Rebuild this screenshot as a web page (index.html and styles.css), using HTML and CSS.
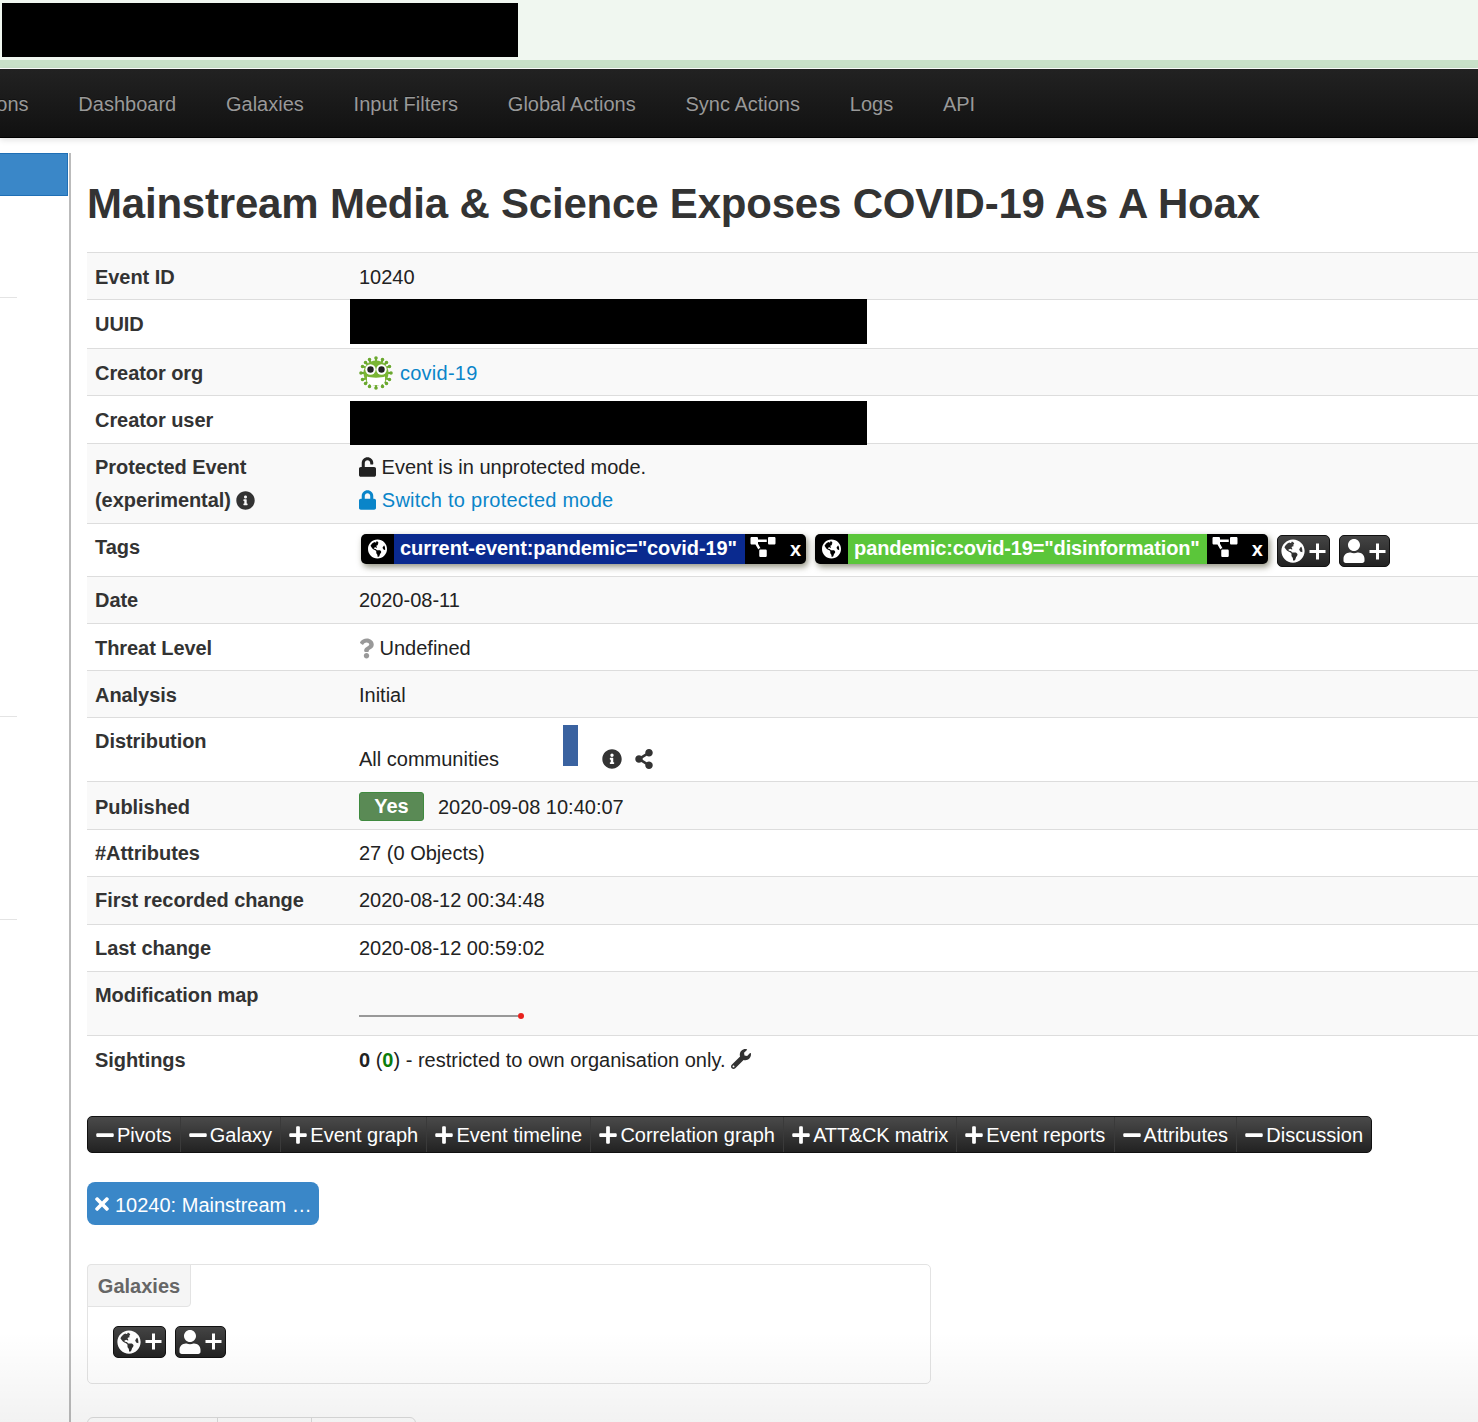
FILE: index.html
```html
<!DOCTYPE html>
<html lang="en">
<head>
    <meta charset="UTF-8">
    <meta name="viewport" content="width=device-width, initial-scale=1.0">
    <title>Mainstream Media &amp; Science Exposes COVID-19 As A Hoax</title>
    <link rel="stylesheet" href="styles.css">
</head>
<body>
    <svg class="icon-defs" xmlns="http://www.w3.org/2000/svg">
        <symbol id="i-globe" viewBox="0 0 496 512"><path d="M248 8C111.03 8 0 119.03 0 256s111.03 248 248 248 248-111.03 248-248S384.97 8 248 8zm82.29 357.6c-3.9 3.88-7.99 7.95-11.31 11.28-2.99 3-5.1 6.7-6.17 10.71-1.51 5.66-2.73 11.38-4.77 16.87l-17.39 46.85c-13.76 3-28 4.69-42.65 4.69v-27.38c1.69-12.62-7.64-36.26-22.63-51.25-6-6-9.37-14.14-9.37-22.63v-32.01c0-11.64-6.27-22.34-16.46-27.97-14.37-7.95-34.81-19.06-48.81-26.11-11.48-5.78-22.1-13.14-31.65-21.75l-.8-.72a114.792 114.792 0 0 1-18.06-20.74c-9.38-13.77-24.66-36.42-34.59-51.14 20.47-45.5 57.36-82.04 103.2-101.89l24.01 12.01C203.48 89.74 216 82.01 216 70.11v-11.3c7.99-1.29 16.12-2.11 24.42-2.43l28.3 28.3c6.25 6.25 6.25 16.38 0 22.63L264 112l-10.34 10.34c-3.12 3.12-3.12 8.19 0 11.31l4.69 4.69c3.12 3.12 3.12 8.19 0 11.31l-8 8a8.008 8.008 0 0 1-5.66 2.34h-8.99c-2.08 0-4.08.81-5.58 2.27l-9.92 9.65a8.008 8.008 0 0 0-1.58 9.31l15.59 31.19c2.66 5.32-1.21 11.58-7.15 11.58h-5.64c-1.93 0-3.79-.7-5.24-1.96l-9.28-8.06a16.017 16.017 0 0 0-15.55-3.1l-31.17 10.39a11.95 11.95 0 0 0-8.17 11.34c0 4.53 2.56 8.66 6.61 10.69l11.08 5.54c9.41 4.71 19.79 7.16 30.31 7.16s22.59 27.29 32 32h66.75c8.49 0 16.62 3.37 22.63 9.37l13.69 13.69a30.503 30.503 0 0 1 8.93 21.57 46.536 46.536 0 0 1-13.72 32.98zM417 274.25c-5.79-1.45-10.84-5-14.15-9.97l-17.98-26.97a23.97 23.97 0 0 1 0-26.62l19.59-29.38c2.32-3.47 5.5-6.29 9.24-8.15l12.98-6.49C440.2 193.59 448 223.87 448 256c0 8.67-.74 17.16-1.82 25.54L417 274.25z"/></symbol>
        <symbol id="i-diagram" viewBox="0 0 640 512"><path d="M384 320H256c-17.67 0-32 14.33-32 32v128c0 17.67 14.33 32 32 32h128c17.67 0 32-14.33 32-32V352c0-17.67-14.33-32-32-32zM192 32c0-17.67-14.33-32-32-32H32C14.33 0 0 14.33 0 32v128c0 17.67 14.33 32 32 32h95.72l73.16 128.04C211.98 300.98 232.4 288 256 288h.28L192 175.51V128h224V64H192V32zM608 0H480c-17.67 0-32 14.33-32 32v128c0 17.67 14.33 32 32 32h128c17.67 0 32-14.33 32-32V32c0-17.67-14.33-32-32-32z"/></symbol>
        <symbol id="i-user" viewBox="0 0 448 512"><path d="M224 256c70.7 0 128-57.3 128-128S294.7 0 224 0 96 57.3 96 128s57.3 128 128 128zm89.6 32h-16.7c-22.2 10.2-46.9 16-72.9 16s-50.6-5.8-72.9-16h-16.7C60.2 288 0 348.2 0 422.4V464c0 26.5 21.5 48 48 48h352c26.5 0 48-21.500 48-48v-41.6c0-74.2-60.2-134.4-134.4-134.4z"/></symbol>
        <symbol id="i-plus" viewBox="0 0 448 512"><path d="M416 208H272V64c0-17.67-14.33-32-32-32h-32c-17.67 0-32 14.33-32 32v144H32c-17.67 0-32 14.33-32 32v32c0 17.67 14.33 32 32 32h144v144c0 17.67 14.33 32 32 32h32c17.67 0 32-14.33 32-32V304h144c17.67 0 32-14.33 32-32v-32c0-17.67-14.33-32-32-32z"/></symbol>
        <symbol id="i-plus-thin" viewBox="0 0 17 17"><path d="M8.500 .5v16M.5 8.500h16" fill="none" stroke="#fff" stroke-width="3"/></symbol>
        <symbol id="i-minus" viewBox="0 0 448 512"><path d="M416 208H32c-17.67 0-32 14.33-32 32v32c0 17.67 14.33 32 32 32h384c17.67 0 32-14.33 32-32v-32c0-17.67-14.33-32-32-32z"/></symbol>
        <symbol id="i-times" viewBox="0 0 352 512"><path d="M242.72 256l100.07-100.07c12.28-12.28 12.28-32.19 0-44.48l-22.24-22.24c-12.28-12.28-32.19-12.28-44.48 0L176 189.28 75.93 89.21c-12.28-12.28-32.19-12.28-44.48 0L9.21 111.45c-12.28 12.28-12.28 32.19 0 44.48L109.28 256 9.21 356.07c-12.28 12.28-12.28 32.19 0 44.48l22.24 22.24c12.28 12.28 32.2 12.28 44.48 0L176 322.72l100.07 100.07c12.28 12.28 32.2 12.28 44.48 0l22.24-22.24c12.28-12.28 12.28-32.19 0-44.48L242.72 256z"/></symbol>
        <symbol id="i-lock" viewBox="0 0 448 512"><path d="M400 224h-24v-72C376 68.2 307.8 0 224 0S72 68.2 72 152v72H48c-26.5 0-48 21.5-48 48v192c0 26.5 21.5 48 48 48h352c26.5 0 48-21.5 48-48V272c0-26.5-21.5-48-48-48zm-104 0H152v-72c0-39.7 32.3-72 72-72s72 32.3 72 72v72z"/></symbol>
        <symbol id="i-unlock" viewBox="0 0 448 512"><path d="M400 256H152V152.9c0-39.6 31.7-72.5 71.3-72.9 40-.4 72.7 32.1 72.7 72v16c0 13.3 10.7 24 24 24h32c13.3 0 24-10.7 24-24v-16C376 68 307.5-.3 223.5 0 139.5.3 72 69.5 72 153.5V256H48c-26.5 0-48 21.5-48 48v160c0 26.5 21.5 48 48 48h352c26.5 0 48-21.5 48-48V304c0-26.5-21.5-48-48-48z"/></symbol>
        <symbol id="i-info" viewBox="0 0 512 512"><path d="M256 8C119.043 8 8 119.083 8 256c0 136.997 111.043 248 248 248s248-111.003 248-248C504 119.083 392.957 8 256 8zm0 110c23.196 0 42 18.804 42 42s-18.804 42-42 42-42-18.804-42-42 18.804-42 42-42zm56 254c0 6.627-5.373 12-12 12h-88c-6.627 0-12-5.373-12-12v-24c0-6.627 5.373-12 12-12h12v-64h-12c-6.627 0-12-5.373-12-12v-24c0-6.627 5.373-12 12-12h64c6.627 0 12 5.373 12 12v100h12c6.627 0 12 5.373 12 12v24z"/></symbol>
        <symbol id="i-share" viewBox="0 0 448 512"><path d="M352 320c-22.608 0-43.387 7.819-59.79 20.895l-102.486-64.054a96.551 96.551 0 0 0 0-41.683l102.486-64.054C308.613 184.181 329.392 192 352 192c53.019 0 96-42.981 96-96S405.019 0 352 0s-96 42.981-96 96c0 7.158.79 14.13 2.276 20.841L155.79 180.895C139.387 167.819 118.608 160 96 160c-53.019 0-96 42.981-96 96s42.981 96 96 96c22.608 0 43.387-7.819 59.79-20.895l102.486 64.054A96.301 96.301 0 0 0 256 416c0 53.019 42.981 96 96 96s96-42.981 96-96-42.981-96-96-96z"/></symbol>
        <symbol id="i-wrench" viewBox="0 0 512 512"><path d="M507.73 109.1c-2.24-9.03-13.54-12.09-20.12-5.51l-74.36 74.36-67.88-11.31-11.31-67.88 74.36-74.36c6.62-6.62 3.43-17.9-5.66-20.16-47.38-11.74-99.55.91-136.58 37.93-39.64 39.64-50.55 97.1-34.05 147.2L18.74 402.76c-24.99 24.99-24.99 65.51 0 90.5 24.99 24.99 65.51 24.99 90.5 0l213.21-213.21c50.12 16.71 107.47 5.68 147.37-34.22 37.07-37.07 49.7-89.32 37.91-136.73zM64 472c-13.25 0-24-10.75-24-24 0-13.26 10.75-24 24-24s24 10.74 24 24c0 13.25-10.75 24-24 24z"/></symbol>
        <symbol id="i-question" viewBox="0 0 384 512"><path d="M202.021 0C122.202 0 70.503 32.703 29.914 91.026c-7.363 10.58-5.093 25.086 5.178 32.874l43.138 32.709c10.373 7.865 25.132 6.026 33.253-4.148 25.049-31.381 43.63-49.449 82.757-49.449 30.764 0 68.816 19.799 68.816 49.631 0 22.552-18.617 34.134-48.993 51.164-35.423 19.86-82.299 44.576-82.299 106.405V320c0 13.255 10.745 24 24 24h72.471c13.255 0 24-10.745 24-24v-5.773c0-42.86 125.268-44.645 125.268-160.627C377.504 66.256 286.902 0 202.021 0zM192 373.459c-38.196 0-69.271 31.075-69.271 69.271 0 38.195 31.075 69.27 69.271 69.27s69.271-31.075 69.271-69.271-31.075-69.27-69.271-69.27z"/></symbol>
    </svg>

    <header class="topband"><div class="redacted-logo"></div></header>

    <nav class="navbar">
        <a href="#">Event Actions</a>
        <a href="#">Dashboard</a>
        <a href="#">Galaxies</a>
        <a href="#">Input Filters</a>
        <a href="#">Global Actions</a>
        <a href="#">Sync Actions</a>
        <a href="#">Logs</a>
        <a href="#">API</a>
    </nav>

    <div class="page">
        <aside class="sidebar">
            <div class="side-active"></div>
            <div class="side-rule rule-1"></div>
            <div class="side-rule rule-2"></div>
            <div class="side-rule rule-3"></div>
        </aside>

        <main class="content">
            <h1>Mainstream Media &amp; Science Exposes COVID-19 As A Hoax</h1>

            <table class="meta">
                <tr class="low"><th>Event ID</th><td>10240</td></tr>
                <tr class="h49 low"><th>UUID</th><td><div class="redacted redacted-uuid"></div></td></tr>
                <tr class="low-th"><th>Creator org</th><td>
                    <span class="org">
                        <svg class="org-logo" viewBox="0 0 34 34">
                            <path d="M17 3v28M3 17h28M7 7l20 20M27 7L7 27M10.500 4.500l13 25M23.500 4.500l-13 25M4.500 10.500l25 13M29.500 10.500l-25 13" stroke="#6aa82e" stroke-width="1.800"/>
                            <path d="M17 2h0M17 32h0M2 17h0M32 17h0M6.500 6.500h0M27.500 6.500h0M6.500 27.500h0M27.500 27.500h0M10.500 3.500h0M23.500 3.500h0M10.500 30.500h0M23.500 30.500h0M3.500 10.500h0M30.500 10.500h0M3.500 23.500h0M30.500 23.500h0" stroke="#6aa82e" stroke-width="3.600" stroke-linecap="round"/>
                            <circle cx="17" cy="17" r="12.500" fill="#7ab534"/>
                            <circle cx="11.500" cy="13.500" r="5.200" fill="#fff"/>
                            <circle cx="22.500" cy="13.500" r="5.200" fill="#fff"/>
                            <circle cx="11.500" cy="13.500" r="3.200" fill="#222"/>
                            <circle cx="22.500" cy="13.500" r="3.200" fill="#222"/>
                            <path d="M8 20.500c3 1.500 15 1.500 18 0v4c0 2.500-3 4.500-5 4.500h-8c-2 0-5-2-5-4.500z" fill="#fff"/>
                        </svg>
                        <a href="#">covid-19</a>
                    </span>
                </td></tr>
                <tr class="h48 low"><th>Creator user</th><td><div class="redacted redacted-user"></div></td></tr>
                <tr class="h80"><th>Protected Event<br>(experimental) <svg class="ico ico-info"><use href="#i-info"/></svg></th><td>
                    <svg class="ico ico-lock"><use href="#i-unlock"/></svg> Event is in unprotected mode.<br>
                    <a href="#"><svg class="ico ico-lock"><use href="#i-lock"/></svg> Switch to protected mode</a>
                </td></tr>
                <tr class="h53"><th>Tags</th><td>
                    <div class="tags">
                        <span class="tag">
                            <span class="tag-globe"><svg class="ico-globe"><use href="#i-globe"/></svg></span>
                            <span class="tag-name tag-blue">current-event:pandemic="covid-19"</span>
                            <span class="tag-tail"><svg class="ico-diagram"><use href="#i-diagram"/></svg><b>x</b></span>
                        </span>
                        <span class="tag">
                            <span class="tag-globe"><svg class="ico-globe"><use href="#i-globe"/></svg></span>
                            <span class="tag-name tag-green">pandemic:covid-19="disinformation"</span>
                            <span class="tag-tail"><svg class="ico-diagram"><use href="#i-diagram"/></svg><b>x</b></span>
                        </span>
                        <span class="add-btn"><svg class="add-main"><use href="#i-globe"/></svg><svg class="add-plus"><use href="#i-plus-thin"/></svg></span>
                        <span class="add-btn"><svg class="add-main add-user"><use href="#i-user"/></svg><svg class="add-plus"><use href="#i-plus-thin"/></svg></span>
                    </div>
                </td></tr>
                <tr><th>Date</th><td>2020-08-11</td></tr>
                <tr class="low"><th>Threat Level</th><td><svg class="ico ico-question"><use href="#i-question"/></svg> Undefined</td></tr>
                <tr class="low"><th>Analysis</th><td>Initial</td></tr>
                <tr class="h64"><th>Distribution</th><td>
                    <div class="distribution">
                        <span>All communities</span>
                        <span class="dist-bar"></span>
                        <svg class="ico dist-info"><use href="#i-info"/></svg>
                        <svg class="ico dist-share"><use href="#i-share"/></svg>
                    </div>
                </td></tr>
                <tr class="h48 row-published"><th>Published</th><td><span class="badge-yes">Yes</span>2020-09-08 10:40:07</td></tr>
                <tr><th>#Attributes</th><td>27 (0 Objects)</td></tr>
                <tr class="h48"><th>First recorded change</th><td>2020-08-12 00:34:48</td></tr>
                <tr><th>Last change</th><td>2020-08-12 00:59:02</td></tr>
                <tr class="h64"><th>Modification map</th><td><div class="modmap"><span class="modmap-line"></span><span class="modmap-dot"></span></div></td></tr>
                <tr class="row-sightings"><th>Sightings</th><td><b>0</b> (<b class="green">0</b>) - restricted to own organisation only. <svg class="ico ico-wrench"><use href="#i-wrench"/></svg></td></tr>
            </table>

            <div class="toolbar">
                <span class="tool"><svg><use href="#i-minus"/></svg>Pivots</span>
                <span class="tool"><svg><use href="#i-minus"/></svg>Galaxy</span>
                <span class="tool"><svg><use href="#i-plus"/></svg>Event graph</span>
                <span class="tool"><svg><use href="#i-plus"/></svg>Event timeline</span>
                <span class="tool"><svg><use href="#i-plus"/></svg>Correlation graph</span>
                <span class="tool tool-tight"><svg><use href="#i-plus"/></svg>ATT&amp;CK matrix</span>
                <span class="tool"><svg><use href="#i-plus"/></svg>Event reports</span>
                <span class="tool"><svg><use href="#i-minus"/></svg>Attributes</span>
                <span class="tool"><svg><use href="#i-minus"/></svg>Discussion</span>
            </div>

            <div class="event-tab"><svg><use href="#i-times"/></svg><span>10240: Mainstream …</span></div>

            <section class="galaxies">
                <div class="galaxies-tab">Galaxies</div>
                <div class="galaxies-body">
                    <span class="add-btn"><svg class="add-main"><use href="#i-globe"/></svg><svg class="add-plus"><use href="#i-plus-thin"/></svg></span>
                    <span class="add-btn"><svg class="add-main add-user"><use href="#i-user"/></svg><svg class="add-plus"><use href="#i-plus-thin"/></svg></span>
                </div>
            </section>

            <div class="bottom-tabs"><span></span><span></span><span></span></div>
        </main>
    </div>

    <div class="bottom-fade"></div>
</body>
</html>
```

FILE: styles.css
```css
html, body {
    margin: 0;
    height: 1422px;
    overflow: hidden;
}
body {
    position: relative;
    font-family: "Liberation Sans", Arial, sans-serif;
    font-size: 20px;
    line-height: 33px;
    color: #222;
    background: #fff;
}
a {
    color: #0a85c9;
    text-decoration: none;
    letter-spacing: .25px;
}
.icon-defs {
    display: none;
}

/* top */
.topband {
    height: 57px;
    padding: 3px 0 0 2px;
    background: #f0f7f0;
    border-bottom: 8px solid #c9e1c9;
}
.redacted-logo {
    width: 516px;
    height: 54px;
    background: #000;
}
.navbar {
    display: flex;
    height: 68px;
    margin-top: 1px;
    overflow: hidden;
    background: linear-gradient(#222, #111);
    border-bottom: 1px solid #000;
    box-shadow: 0 2px 6px rgba(0, 0, 0, .12);
}
.navbar a {
    padding: 0 24.9px;
    line-height: 70px;
    color: #999;
    letter-spacing: 0;
    white-space: nowrap;
    text-shadow: 0 -1px 0 rgba(0, 0, 0, .4);
}
.navbar a:first-child {
    margin-left: -117.5px;
}

/* page */
.page {
    display: flex;
    margin-top: 15px;
}
.sidebar {
    flex: none;
    width: 69px;
    height: 1269px;
    border-right: 2px solid #bbb;
}
.side-active {
    width: 67px;
    height: 41px;
    background: #3a87c8;
    border: solid #1f6fb5;
    border-width: 1px 1px 1px 0;
}
.side-rule {
    width: 17px;
    height: 1px;
    background: #e4e4e4;
}
.rule-1 {
    margin-top: 101px;
}
.rule-2 {
    margin-top: 418px;
}
.rule-3 {
    margin-top: 202px;
}
.content {
    flex: 1;
    min-width: 0;
    padding-left: 16px;
}
h1 {
    height: 75px;
    margin: 0;
    padding-top: 24px;
    font-size: 42px;
    line-height: 54px;
    letter-spacing: -.2px;
    font-weight: bold;
    color: #333;
    white-space: nowrap;
}

/* event table */
.meta {
    width: 100%;
    border-collapse: collapse;
    border-top: 1px solid #ddd;
}
.meta tr {
    height: 47px;
}
.meta tr:nth-child(odd) {
    background: #f9f9f9;
}
.meta tr + tr {
    border-top: 1px solid #ddd;
}
.meta th, .meta td {
    padding: 7px 9px 0;
    vertical-align: top;
    text-align: left;
}
.meta th {
    width: 246px;
    padding-left: 8px;
    color: #333;
    letter-spacing: -.06px;
    white-space: nowrap;
}
.meta td {
    position: relative;
}
.meta .h48 {
    height: 48px;
}
.meta .h49 {
    height: 49px;
}
.meta .h53 {
    height: 53px;
}
.meta .h64 {
    height: 64px;
}
.meta .h80 {
    height: 80px;
}
.meta .low th, .meta .low td, .meta .low-th th, .meta .row-sightings th, .meta .row-sightings td {
    padding-top: 8px;
}
.meta .row-published th, .meta .row-published td {
    padding-top: 9px;
}
.redacted {
    position: absolute;
    left: 0;
    width: 517px;
    background: #000;
}
.redacted-uuid {
    top: -1px;
    height: 45px;
}
.redacted-user {
    top: 5px;
    height: 44px;
}
.org {
    display: flex;
    align-items: center;
    gap: 7px;
}
.org-logo {
    width: 34px;
    height: 34px;
}
.ico {
    display: inline-block;
    fill: currentColor;
}
.ico-info {
    width: 19px;
    height: 19px;
    vertical-align: -3px;
    fill: #333;
}
.ico-lock {
    width: 17px;
    height: 20px;
    vertical-align: -3px;
}
.ico-question {
    width: 15px;
    height: 21px;
    vertical-align: -4px;
    fill: #999;
}
.ico-wrench {
    width: 20px;
    height: 20px;
    vertical-align: -2px;
    fill: #333;
}

/* tags */
.tags {
    display: flex;
    align-items: flex-start;
    gap: 9px;
    padding: 3px 0 0 2px;
}
.tag {
    display: flex;
    height: 30px;
    line-height: 29px;
    border-radius: 5px;
    background: #000;
    color: #fff;
    font-weight: bold;
    white-space: nowrap;
    box-shadow: 2px 3px 6px rgba(60, 60, 30, .55);
}
.tag-globe {
    display: flex;
    align-items: center;
    justify-content: center;
    width: 33px;
}
.ico-globe {
    width: 19px;
    height: 20px;
    fill: #fff;
}
.tag-name {
    padding: 0 8px 0 6px;
}
.tag-blue {
    background: #0a2a8f;
    letter-spacing: -.08px;
}
.tag-green {
    padding-right: 7px;
    background: #5bc63a;
    letter-spacing: -.15px;
}
.tag-tail {
    display: flex;
    align-items: center;
    padding: 0 5px 0 5px;
}
.tag-tail b {
    margin-left: 14px;
}
.ico-diagram {
    width: 26px;
    height: 20px;
    margin-top: -5px;
    fill: #fff;
}
.add-btn {
    display: inline-flex;
    align-items: center;
    gap: 4px;
    height: 32px;
    padding: 0 3px;
    box-sizing: border-box;
    margin-top: 1px;
    background: linear-gradient(#444, #222);
    border: 1px solid #111;
    border-radius: 5px;
}
.add-main {
    width: 24px;
    height: 24px;
    fill: #fff;
}
.add-user {
    width: 22px;
}
.add-plus {
    width: 17px;
    height: 17px;
}

/* distribution, badge, map */
.distribution {
    display: flex;
    align-items: flex-end;
}
.dist-bar {
    width: 15px;
    height: 41px;
    margin: 0 24px 10px 64px;
    background: #3a62a0;
}
.dist-info {
    width: 20px;
    height: 20px;
    margin-bottom: 7px;
    fill: #333;
}
.dist-share {
    width: 18px;
    height: 20px;
    margin: 0 0 7px 13px;
    fill: #333;
}
.badge-yes {
    display: inline-block;
    width: 65px;
    height: 29px;
    margin-right: 14px;
    box-sizing: border-box;
    border: 1px solid #3f8a3f;
    border-radius: 3px;
    background: #5a8a55;
    color: #fff;
    font-weight: bold;
    line-height: 27px;
    text-align: center;
    vertical-align: 1px;
}
.modmap {
    display: flex;
    align-items: center;
    height: 14px;
    margin-top: 30px;
}
.modmap-line {
    width: 159px;
    height: 2px;
    background: #999;
}
.modmap-dot {
    width: 6px;
    height: 6px;
    border-radius: 50%;
    background: #e8211d;
}
.green {
    color: #0a7d0a;
}

/* toolbar */
.toolbar {
    display: inline-flex;
    height: 37px;
    margin-top: 33px;
    box-sizing: border-box;
    background: linear-gradient(#4a4a4a, #222);
    border: 1px solid #111;
    border-radius: 5px;
    vertical-align: top;
}
.tool {
    display: flex;
    align-items: center;
    gap: 3px;
    padding: 2px 8.3px 0 8px;
    color: #fff;
    white-space: nowrap;
    border-left: 1px solid #3a3a3a;
}
.tool:first-child {
    border-left: 0;
}
.tool-tight {
    letter-spacing: -.2px;
}
.tool svg {
    width: 18px;
    height: 20px;
    fill: #fff;
}
.event-tab {
    display: flex;
    align-items: center;
    gap: 6px;
    width: 232px;
    height: 43px;
    margin-top: 29px;
    padding: 5px 0 0 8px;
    box-sizing: border-box;
    background: #3a87c8;
    border-radius: 8px;
    color: #fff;
}
.event-tab svg {
    width: 14px;
    height: 20px;
    margin-top: -3px;
    fill: #fff;
}

/* galaxies */
.galaxies {
    width: 844px;
    height: 120px;
    margin-top: 39px;
    box-sizing: border-box;
    border: 1px solid #e3e3e3;
    border-radius: 5px;
}
.galaxies-tab {
    width: 104px;
    height: 43px;
    margin: -1px 0 0 -1px;
    box-sizing: border-box;
    background: #f5f5f5;
    border: 1px solid #e3e3e3;
    border-radius: 4px 0 4px 0;
    color: #666;
    font-weight: bold;
    line-height: 43px;
    text-align: center;
}
.galaxies-body {
    display: flex;
    gap: 9px;
    padding: 18px 0 0 25px;
}
.bottom-tabs {
    display: flex;
    width: 329px;
    height: 30px;
    margin-top: 33px;
    box-sizing: border-box;
    border: 1px solid #ddd;
    border-radius: 6px 6px 0 0;
}
.bottom-tabs span {
    width: 93px;
    border-left: 1px solid #ddd;
}
.bottom-tabs span:first-child {
    width: 129px;
    border-left: 0;
}
.bottom-fade {
    position: absolute;
    left: 0;
    right: 0;
    bottom: 0;
    height: 90px;
    background: linear-gradient(rgba(0, 0, 0, 0), rgba(0, 0, 0, .05));
    pointer-events: none;
}
```
